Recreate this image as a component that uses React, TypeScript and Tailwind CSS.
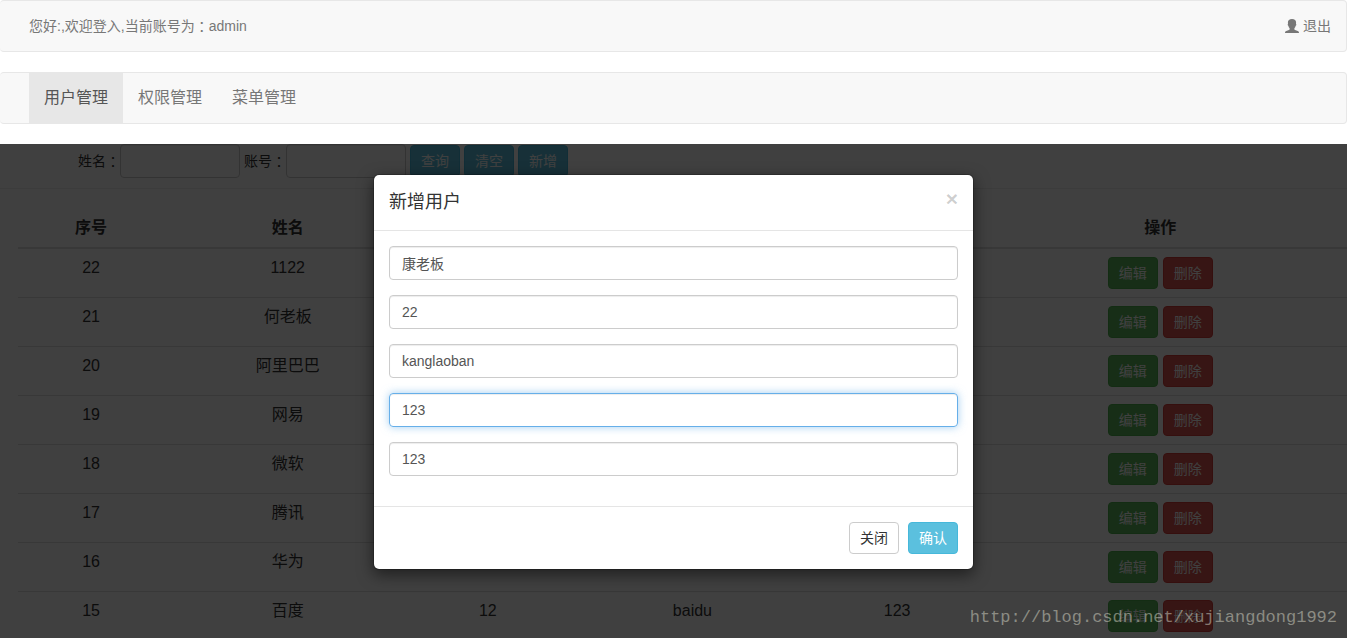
import React, { useState } from 'react';

interface TUser {
  id: number;
  name: string;
  age?: string;
  account?: string;
  password?: string;
}

interface TField {
  key: string;
  label: string;
  value: string;
}

const TABS = ['用户管理', '权限管理', '菜单管理'];

const USERS: TUser[] = [
  { id: 22, name: '1122' },
  { id: 21, name: '何老板' },
  { id: 20, name: '阿里巴巴' },
  { id: 19, name: '网易' },
  { id: 18, name: '微软' },
  { id: 17, name: '腾讯' },
  { id: 16, name: '华为' },
  { id: 15, name: '百度', age: '12', account: 'baidu', password: '123' },
];

const FIELDS: TField[] = [
  { key: 'name', label: '姓名', value: '康老板' },
  { key: 'age', label: '年龄', value: '22' },
  { key: 'account', label: '账号', value: 'kanglaoban' },
  { key: 'password', label: '密码', value: '123' },
  { key: 'confirm', label: '确认密码', value: '123' },
];

const BUTTON_STYLES = {
  info: 'border-[#46b8da] bg-[#5bc0de] text-white',
  success: 'border-[#4cae4c] bg-[#5cb85c] text-white',
  danger: 'border-[#d43f3a] bg-[#d9534f] text-white',
  default: 'border-[#ccc] bg-white text-[#333]',
};

function Button({
  variant,
  children,
  onClick,
}: {
  variant: keyof typeof BUTTON_STYLES;
  children: React.ReactNode;
  onClick?: () => void;
}) {
  return (
    <button
      type="button"
      onClick={onClick}
      className={`h-8 rounded border px-2.5 text-sm whitespace-nowrap ${BUTTON_STYLES[variant]}`}
    >
      {children}
    </button>
  );
}

// full-width colon, centred in its cell
function Colon() {
  return <span className="font-['Noto_Sans_CJK_JP',sans-serif]">：</span>;
}

function UserIcon() {
  return (
    <svg
      className="h-3.5 w-3.5"
      viewBox="0 0 14 14"
      fill="currentColor"
      aria-hidden="true"
    >
      <path d="M7 0C4.400 0 2.900 1.400 2.900 3.600c0 .5.1 1 .1 1.300-.3 0-.4.3-.3.8.1.7.3 1 .6 1.100.3 1.100.7 1.900 1.300 2.500v.9c0 .4-.2.6-.7.8L1.300 12C.4 12.400 0 12.900 0 14h14c0-1.100-.4-1.600-1.300-2l-2.600-1c-.5-.2-.7-.4-.7-.8v-.9c.6-.6 1-1.400 1.300-2.500.3-.1.5-.4.6-1.100.1-.5 0-.8-.3-.8 0-.3.1-.8.1-1.300C11.100 1.400 9.600 0 7 0Z" />
    </svg>
  );
}

function SearchBar({ onClickAdd }: { onClickAdd: () => void }) {
  return (
    <form className="flex gap-1 border-b border-[#eee] pb-2.5 pl-[78px] text-sm">
      <label className="flex items-center" htmlFor="search-name">
        姓名
        <Colon />
      </label>
      <input
        id="search-name"
        className="-ml-1 h-[34px] w-[120px] rounded border border-[#ccc] px-3 shadow-[inset_0_1px_1px_rgba(0,0,0,0.075)]"
      />
      <label className="flex items-center" htmlFor="search-account">
        账号
        <Colon />
      </label>
      <input
        id="search-account"
        className="-ml-1 h-[34px] w-[120px] rounded border border-[#ccc] px-3 shadow-[inset_0_1px_1px_rgba(0,0,0,0.075)]"
      />
      <div className="flex items-center gap-1">
        <Button variant="info">查询</Button>
        <Button variant="info">清空</Button>
        <Button variant="info" onClick={onClickAdd}>
          新增
        </Button>
      </div>
    </form>
  );
}

function UserTable() {
  return (
    <div className="pt-5 pl-[18px]">
      <table className="w-full table-fixed border-separate border-spacing-0 text-center text-base leading-[22px]">
        <thead>
          <tr className="[&>th]:border-b-2 [&>th]:border-[#ddd] [&>th]:p-2">
            <th className="w-[11%]">序号</th>
            <th className="w-[18.6%]">姓名</th>
            <th className="w-[11.5%]"></th>
            <th className="w-[19.3%]"></th>
            <th className="w-[11.5%]"></th>
            <th className="w-[28.1%]">操作</th>
          </tr>
        </thead>
        <tbody>
          {USERS.map((user) => (
            <tr
              key={user.id}
              className="align-top [&>td]:border-t [&>td]:border-[#ddd] [&>td]:p-2 first:[&>td]:border-t-0"
            >
              <td>{user.id}</td>
              <td>{user.name}</td>
              <td>{user.age}</td>
              <td>{user.account}</td>
              <td>{user.password}</td>
              <td>
                <div className="flex justify-center gap-[5px]">
                  <Button variant="success">编辑</Button>
                  <Button variant="danger">删除</Button>
                </div>
              </td>
            </tr>
          ))}
        </tbody>
      </table>
    </div>
  );
}

function AddUserModal({ close }: { close: () => void }) {
  const [form, setForm] = useState(FIELDS);
  const [activeKey, setActiveKey] = useState('password');

  const onChangeField = (key: string, value: string) => {
    setForm((prev) =>
      prev.map((field) => (field.key === key ? { ...field, value } : field)),
    );
  };

  return (
    <div className="absolute inset-0 bg-black/75">
      <div
        role="dialog"
        aria-labelledby="modal-title"
        className="mx-auto mt-[30px] w-full max-w-[601px] rounded-md border border-black/20 bg-white bg-clip-padding shadow-[0_5px_15px_rgba(0,0,0,0.5)]"
      >
        <div className="flex items-start justify-between border-b border-[#e5e5e5] p-[15px]">
          <h4 id="modal-title" className="text-lg leading-[25px]">
            新增用户
          </h4>
          <button
            type="button"
            aria-label="关闭"
            onClick={close}
            className="text-[21px] leading-[18px] font-bold text-black/20"
          >
            ×
          </button>
        </div>
        <div className="flex flex-col gap-[15px] px-[15px] pt-[15px] pb-[30px]">
          {form.map(({ key, label, value }) => (
            <input
              key={key}
              aria-label={label}
              value={value}
              onChange={(e) => onChangeField(key, e.target.value)}
              onFocus={() => setActiveKey(key)}
              className={`h-[34px] w-full rounded border px-3 text-sm text-[#555] outline-none ${
                activeKey === key
                  ? 'border-[#66afe9] shadow-[inset_0_1px_1px_rgba(0,0,0,0.075),0_0_8px_rgba(102,175,233,0.6)]'
                  : 'border-[#ccc] shadow-[inset_0_1px_1px_rgba(0,0,0,0.075)]'
              }`}
            />
          ))}
        </div>
        <div className="flex justify-end gap-[9px] border-t border-[#e5e5e5] p-[15px]">
          <Button variant="default" onClick={close}>
            关闭
          </Button>
          <Button variant="info">确认</Button>
        </div>
      </div>
    </div>
  );
}

export default function App() {
  const [activeTab, setActiveTab] = useState(TABS[0]);
  const [isModalOpen, setIsModalOpen] = useState(true);

  return (
    <div className="flex h-screen flex-col overflow-hidden bg-white font-['Liberation_Sans','Noto_Sans_CJK_SC',sans-serif] text-[#333]">
      <header className="mb-5 flex shrink-0 items-center justify-between rounded border border-l-0 border-[#e7e7e7] bg-[#f8f8f8] pr-[15px] pl-[29px] text-sm leading-[50px] text-[#777]">
        <p className="flex">
          您好:,欢迎登入,当前账号为
          <Colon />
          admin
        </p>
        <a href="#logout" className="flex items-center gap-1">
          <UserIcon />
          退出
        </a>
      </header>
      <nav className="mb-5 flex shrink-0 rounded border border-l-0 border-[#e7e7e7] bg-[#f8f8f8] pl-[29px] text-base leading-[50px]">
        {TABS.map((tab) => (
          <a
            key={tab}
            href="#tab"
            onClick={() => setActiveTab(tab)}
            className={`px-[15px] ${
              activeTab === tab ? 'bg-[#e7e7e7] text-[#555]' : 'text-[#777]'
            }`}
          >
            {tab}
          </a>
        ))}
      </nav>
      <main className="relative min-h-0 grow overflow-hidden">
        <SearchBar onClickAdd={() => setIsModalOpen(true)} />
        <UserTable />
        {isModalOpen && <AddUserModal close={() => setIsModalOpen(false)} />}
        <span className="absolute right-2.5 bottom-2 font-['Liberation_Mono',monospace] text-[17px] text-[#d8d8c8]/50">
          http://blog.csdn.net/xujiangdong1992
        </span>
      </main>
    </div>
  );
}
